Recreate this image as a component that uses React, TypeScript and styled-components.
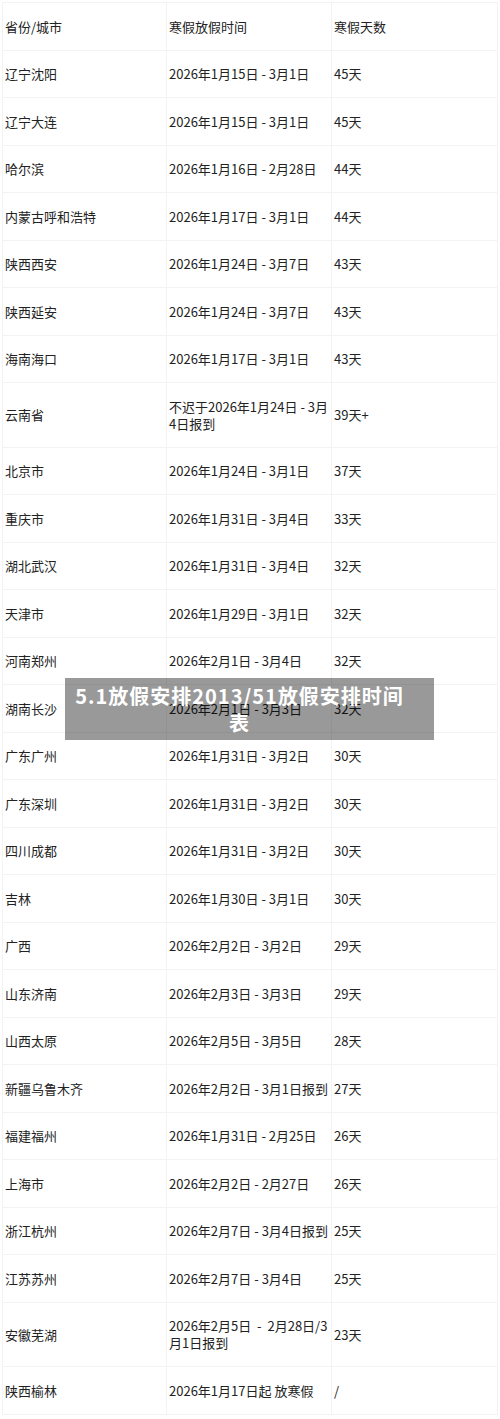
import styled, { createGlobalStyle } from 'styled-components';

const GlobalStyle = createGlobalStyle`
  body {
    margin: 0;
    background: #ffffff;
    font-family: "Noto Sans CJK SC", "Noto Sans", sans-serif;
  }
`;

const rows: [string, string, string][] = [
  ['辽宁沈阳', '2026年1月15日 - 3月1日', '45天'],
  ['辽宁大连', '2026年1月15日 - 3月1日', '45天'],
  ['哈尔滨', '2026年1月16日 - 2月28日', '44天'],
  ['内蒙古呼和浩特', '2026年1月17日 - 3月1日', '44天'],
  ['陕西西安', '2026年1月24日 - 3月7日', '43天'],
  ['陕西延安', '2026年1月24日 - 3月7日', '43天'],
  ['海南海口', '2026年1月17日 - 3月1日', '43天'],
  ['云南省', '不迟于2026年1月24日 - 3月4日报到', '39天+'],
  ['北京市', '2026年1月24日 - 3月1日', '37天'],
  ['重庆市', '2026年1月31日 - 3月4日', '33天'],
  ['湖北武汉', '2026年1月31日 - 3月4日', '32天'],
  ['天津市', '2026年1月29日 - 3月1日', '32天'],
  ['河南郑州', '2026年2月1日 - 3月4日', '32天'],
  ['湖南长沙', '2026年2月1日 - 3月3日', '32天'],
  ['广东广州', '2026年1月31日 - 3月2日', '30天'],
  ['广东深圳', '2026年1月31日 - 3月2日', '30天'],
  ['四川成都', '2026年1月31日 - 3月2日', '30天'],
  ['吉林', '2026年1月30日 - 3月1日', '30天'],
  ['广西', '2026年2月2日 - 3月2日', '29天'],
  ['山东济南', '2026年2月3日 - 3月3日', '29天'],
  ['山西太原', '2026年2月5日 - 3月5日', '28天'],
  ['新疆乌鲁木齐', '2026年2月2日 - 3月1日报到', '27天'],
  ['福建福州', '2026年1月31日 - 2月25日', '26天'],
  ['上海市', '2026年2月2日 - 2月27日', '26天'],
  ['浙江杭州', '2026年2月7日 - 3月4日报到', '25天'],
  ['江苏苏州', '2026年2月7日 - 3月4日', '25天'],
  ['安徽芜湖', '2026年2月5日 \u00a0- \u00a02月28日/3月1日报到', '23天'],
  ['陕西榆林', '2026年1月17日起 放寒假', '/'],
];

const App = () => {
  return (
    <Page>
      <GlobalStyle />
      <Table>
        <colgroup>
          <col width="164" />
          <col width="165" />
          <col width="166" />
        </colgroup>
        <thead>
          <tr>
            <Cell as="th">省份/城市</Cell>
            <Cell as="th">寒假放假时间</Cell>
            <Cell as="th">寒假天数</Cell>
          </tr>
        </thead>
        <tbody>
          {rows.map((row) => (
            <tr key={row[0]}>
              <Cell>{row[0]}</Cell>
              <Cell>{row[1]}</Cell>
              <Cell>{row[2]}</Cell>
            </tr>
          ))}
        </tbody>
      </Table>
      <Caption>5.1放假安排2013/51放假安排时间表</Caption>
    </Page>
  );
};

export default App;

const Page = styled.div`
  position: relative;
  width: 500px;
  padding: 2px 0 0 2px;
  box-sizing: border-box;
`;

const Table = styled.table`
  width: 495px;
  border-collapse: collapse;
  table-layout: fixed;
  border: 1px solid #f3f3f3;
`;

const Cell = styled.td`
  padding: 14.75px 0 14.75px 2px;
  border: 1px solid #f3f3f3;
  font-size: 13px;
  line-height: 17px;
  font-weight: 400;
  color: #222;
  text-align: left;
  vertical-align: middle;
  word-break: break-all;
`;

const Caption = styled.div`
  position: absolute;
  left: 65px;
  top: 678px;
  width: 369px;
  box-sizing: border-box;
  padding: 4px 25px 4px 5px;
  background: rgba(0, 0, 0, 0.4);
  color: #fff;
  font-size: 20px;
  font-weight: 700;
  line-height: 27px;
  letter-spacing: 1px;
  text-align: center;
`;
